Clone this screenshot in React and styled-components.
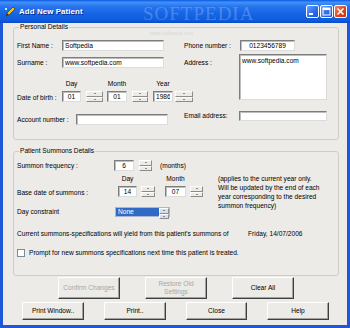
import styled, { createGlobalStyle } from "styled-components";

const GlobalStyle = createGlobalStyle`
  html, body { margin: 0; padding: 0; background: #fff; }
  body { font-family: "Liberation Sans", Arial, sans-serif; }
  * { box-sizing: border-box; }
`;

const FACE = "#ECEBE7";

const Window = styled.div`
  width: 350px;
  height: 328px;
  display: flex;
  flex-direction: column;
  position: relative;
  overflow: hidden;
  font-size: 6.6px;
  color: #000;
`;

const TitleBar = styled.div`
  height: 23px;
  flex: none;
  display: flex;
  align-items: center;
  padding: 0 3px 0 4px;
  background: linear-gradient(
    180deg,
    #0a5be6 0%,
    #4390f8 10%,
    #2874ee 28%,
    #1565e4 60%,
    #0f5cde 88%,
    #0a4ac6 100%
  );
`;

const TitleText = styled.span`
  margin-left: 3px;
  color: #fff;
  font-weight: bold;
  font-size: 7.9px;
  text-shadow: 1px 1px 0 #0b2a8c;
  letter-spacing: 0.1px;
`;

const Controls = styled.div`
  margin-left: auto;
  display: flex;
  gap: 1px;
`;

const CtrlButton = styled.div`
  width: 13px;
  height: 13px;
  border: 1px solid #fff;
  border-radius: 2px;
  background: ${(p) =>
    p.close
      ? "linear-gradient(135deg, #f08a6a, #e0441c 55%, #c53410)"
      : "linear-gradient(135deg, #6da3fb, #2f6fef 55%, #1a55d8)"};
  display: flex;
  align-items: center;
  justify-content: center;
`;

const Frame = styled.div`
  flex: 1;
  display: flex;
  border: 3px solid #1d58d8;
  border-top: none;
`;

const Body = styled.div`
  flex: 1;
  background: ${FACE};
  padding: 0 8px 0 10px;
  display: flex;
  flex-direction: column;
`;

const Group = styled.fieldset`
  margin: ${(p) => p.mt || 0}px 0 0 0;
  padding: ${(p) => p.pad};
  border: 1px solid #cfcdc4;
  border-radius: 3px;
  min-width: 0;
`;

const Legend = styled.legend`
  margin-left: 2px;
  padding: 0 1px;
  line-height: 8px;
  font-size: 6.6px;
`;

const Columns = styled.div`
  display: flex;
`;

const Column = styled.div`
  display: flex;
  flex-direction: column;
  width: ${(p) => p.w}px;
  flex: none;
`;

const Row = styled.div`
  display: flex;
  align-items: ${(p) => p.align || "center"};
  margin-top: ${(p) => p.mt || 0}px;
  width: max-content;
`;

const Label = styled.span`
  width: ${(p) => (p.w ? `${p.w}px` : "auto")};
  flex: none;
  line-height: 8px;
  white-space: nowrap;
  padding-top: ${(p) => p.pt || 0}px;
  margin-left: ${(p) => p.ml || 0}px;
  align-self: ${(p) => p.self || "auto"};
`;

const Field = styled.input`
  width: ${(p) => p.w}px;
  height: ${(p) => p.h || 11}px;
  flex: none;
  margin: 0 0 0 ${(p) => p.ml || 0}px;
  padding: 0 2px;
  font: inherit;
  font-size: 6.6px;
  color: #000;
  text-align: ${(p) => (p.center ? "center" : "left")};
  background: #fff;
  border: 1px solid;
  border-color: #7d7d7d #dcdcdc #dcdcdc #7d7d7d;
  box-shadow: inset 1px 1px 0 #bdbdbd;
  outline: none;
`;

const Area = styled.textarea`
  width: ${(p) => p.w}px;
  height: ${(p) => p.h}px;
  flex: none;
  margin: 0;
  padding: 2px 2px;
  font: inherit;
  font-size: 6.6px;
  line-height: 8px;
  resize: none;
  background: #fff;
  border: 1px solid;
  border-color: #7d7d7d #dcdcdc #dcdcdc #7d7d7d;
  box-shadow: inset 1px 1px 0 #bdbdbd;
  outline: none;
  overflow: hidden;
`;

const DateCol = styled.div`
  display: flex;
  flex-direction: column;
  align-items: center;
  gap: 3px;
  margin-left: ${(p) => p.ml || 0}px;
`;

const Spin = styled.div`
  width: ${(p) => p.w}px;
  height: 11px;
  flex: none;
  margin-left: ${(p) => p.ml || 0}px;
  display: flex;
  flex-direction: column;
`;

const SpinHalf = styled.div`
  flex: 1;
  display: flex;
  align-items: center;
  justify-content: center;
  background: ${(p) => p.bg || FACE};
  border: 1px solid;
  border-color: #ffffff #8c8c8c #8c8c8c #ffffff;
  &::after {
    content: "";
    width: 0;
    height: 0;
    border-left: 1px solid transparent;
    border-right: 1px solid transparent;
    ${(p) =>
      p.up ? "border-bottom: 1px solid #333;" : "border-top: 1px solid #333;"}
  }
`;

const Select = styled.div`
  width: 55px;
  height: 10px;
  display: flex;
  border: 1px solid #a9b8d0;
  background: #fff;
`;

const Selected = styled.div`
  flex: 1;
  background: #316ac5;
  color: #fff;
  padding-left: 2px;
  line-height: 8px;
`;

const Note = styled.div`
  margin: 3px 0 0 0;
  line-height: 9px;
`;

const Check = styled.span`
  width: 8px;
  height: 8px;
  flex: none;
  margin-right: 4px;
  background: #fff;
  border: 1px solid #7d8a99;
`;

const ButtonRow = styled.div`
  display: flex;
  gap: ${(p) => p.gap}px;
  padding-left: ${(p) => p.pl}px;
  margin-top: ${(p) => p.mt}px;
`;

const Button = styled.div`
  width: ${(p) => p.w || 62}px;
  height: ${(p) => p.h}px;
  display: flex;
  align-items: center;
  justify-content: center;
  text-align: center;
  line-height: 8px;
  color: ${(p) => (p.disabled ? "#a8a7a2" : "#000")};
  background: ${FACE};
  border: 1px solid;
  border-color: #ffffff #3f3f3f #3f3f3f #ffffff;
  box-shadow: inset -1px -1px 0 #a2a19c;
`;

const Watermark = styled.div`
  position: absolute;
  left: 143px;
  top: 3px;
  font-family: "Liberation Serif", "Times New Roman", serif;
  font-size: 19px;
  letter-spacing: 1px;
  color: rgba(255, 255, 255, 0.22);
  pointer-events: none;
`;

const WatermarkUrl = styled.div`
  position: absolute;
  left: 150px;
  top: 30px;
  font-size: 5px;
  font-style: italic;
  color: rgba(180, 180, 180, 0.4);
  pointer-events: none;
`;

function SpinBox({ w = 16, ml = 0 }) {
  return (
    <Spin w={w} ml={ml}>
      <SpinHalf up />
      <SpinHalf />
    </Spin>
  );
}

function DateField({ label, value, w, ml }) {
  return (
    <DateCol ml={ml}>
      <Label>{label}</Label>
      <Field w={w} value={value} readOnly center />
    </DateCol>
  );
}

function AppIcon() {
  return (
    <svg width="12" height="12" viewBox="0 0 12 12">
      <path d="M2 10 L3 7 L9 1 L11 3 L5 9 Z" fill="#f2c21b" stroke="#5a4100" strokeWidth="0.8" />
      <path d="M2 10 L3 7 L5 9 Z" fill="#333" />
      <path d="M1 4 L3 2 M1 2 L3 4" stroke="#fff" strokeWidth="0.8" />
    </svg>
  );
}

export default function App() {
  return (
    <Window>
      <GlobalStyle />
      <TitleBar>
        <AppIcon />
        <TitleText>Add New Patient</TitleText>
        <Controls>
          <CtrlButton>
            <svg width="9" height="9" viewBox="0 0 9 9">
              <rect x="1" y="6" width="4" height="2" fill="#fff" />
            </svg>
          </CtrlButton>
          <CtrlButton>
            <svg width="9" height="9" viewBox="0 0 9 9">
              <rect x="1" y="1" width="7" height="7" fill="none" stroke="#fff" strokeWidth="1" />
              <rect x="1" y="1" width="7" height="2" fill="#fff" />
            </svg>
          </CtrlButton>
          <CtrlButton close>
            <svg width="9" height="9" viewBox="0 0 9 9">
              <path d="M1.5 1.5 L7.5 7.5 M7.5 1.5 L1.5 7.5" stroke="#fff" strokeWidth="1.6" />
            </svg>
          </CtrlButton>
        </Controls>
      </TitleBar>
      <Frame>
        <Body>
          <Group pad="9px 0 14px 3px">
            <Legend>Personal Details</Legend>
            <Columns>
              <Column w={167}>
                <Row>
                  <Label w={45}>First Name :</Label>
                  <Field w={102} value="Softpedia" readOnly />
                </Row>
                <Row mt={6}>
                  <Label w={45}>Surname :</Label>
                  <Field w={102} value="www.softpedia.com" readOnly />
                </Row>
                <Row mt={12} align="flex-end">
                  <Label w={45} self="flex-end" pt={2}>
                    Date of birth :
                  </Label>
                  <DateField label="Day" value="01" w={19} />
                  <SpinBox w={17} ml={5} />
                  <DateField label="Month" value="01" w={20} ml={4} />
                  <SpinBox w={16} ml={5} />
                  <DateField label="Year" value="1986" w={20} ml={5} />
                  <SpinBox w={18} ml={2} />
                </Row>
                <Row mt={12}>
                  <Label w={59}>Account number :</Label>
                  <Field w={92} readOnly value="" />
                </Row>
              </Column>
              <Column w={150}>
                <Row>
                  <Label w={56}>Phone number :</Label>
                  <Field w={55} value="0123456789" readOnly center />
                </Row>
                <Row mt={3} align="flex-start">
                  <Label w={55} pt={5}>
                    Address :
                  </Label>
                  <Area w={88} h={46} value="www.softpedia.com" readOnly />
                </Row>
                <Row mt={11}>
                  <Label w={55}>Email address:</Label>
                  <Field w={88} h={10} readOnly value="" />
                </Row>
              </Column>
            </Columns>
          </Group>

          <Group mt={7} pad="5px 0 18px 3px">
            <Legend>Patient Summons Details</Legend>
            <Row>
              <Label w={97}>Summon frequency :</Label>
              <Field w={20} value="6" readOnly center />
              <SpinBox w={13} ml={5} />
              <Label ml={8}>(months)</Label>
            </Row>
            <Columns>
              <Column w={201}>
                <Row mt={4} align="flex-end">
                  <Label w={101} pt={2}>
                    Base date of summons :
                  </Label>
                  <DateField label="Day" value="14" w={19} />
                  <SpinBox w={14} ml={4} />
                  <DateField label="Month" value="07" w={21} ml={10} />
                  <SpinBox w={13} ml={4} />
                </Row>
                <Row mt={10}>
                  <Label w={98}>Day constraint</Label>
                  <Select>
                    <Selected>None</Selected>
                    <Spin w={10}>
                      <SpinHalf up bg="#d6dff0" />
                      <SpinHalf bg="#d6dff0" />
                    </Spin>
                  </Select>
                </Row>
              </Column>
              <Note>
                (applies to the current year only.
                <br />
                Will be updated by the end of each
                <br />
                year corresponding to the desired
                <br />
                summon frequency)
              </Note>
            </Columns>
            <Row mt={13}>
              <Label w={231}>
                Current summons-specifications will yield from this patient's summons of
              </Label>
              <Label>Friday, 14/07/2006</Label>
            </Row>
            <Row mt={11}>
              <Check />
              <Label>Prompt for new summons specifications next time this patient is treated.</Label>
            </Row>
          </Group>

          <ButtonRow pl={45} gap={25} mt={1}>
            <Button h={22} disabled>
              Confirm Changes
            </Button>
            <Button h={22} disabled>
              Restore Old
              <br />
              Settings
            </Button>
            <Button h={22}>Clear All</Button>
          </ButtonRow>
          <ButtonRow pl={9} gap={20} mt={3}>
            <Button h={18}>Print Window..</Button>
            <Button h={18}>Print..</Button>
            <Button h={18} w={61}>
              Close
            </Button>
            <Button h={18}>Help</Button>
          </ButtonRow>
        </Body>
      </Frame>
      <Watermark>SOFTPEDIA</Watermark>
      <WatermarkUrl>www.softpedia.com</WatermarkUrl>
    </Window>
  );
}
